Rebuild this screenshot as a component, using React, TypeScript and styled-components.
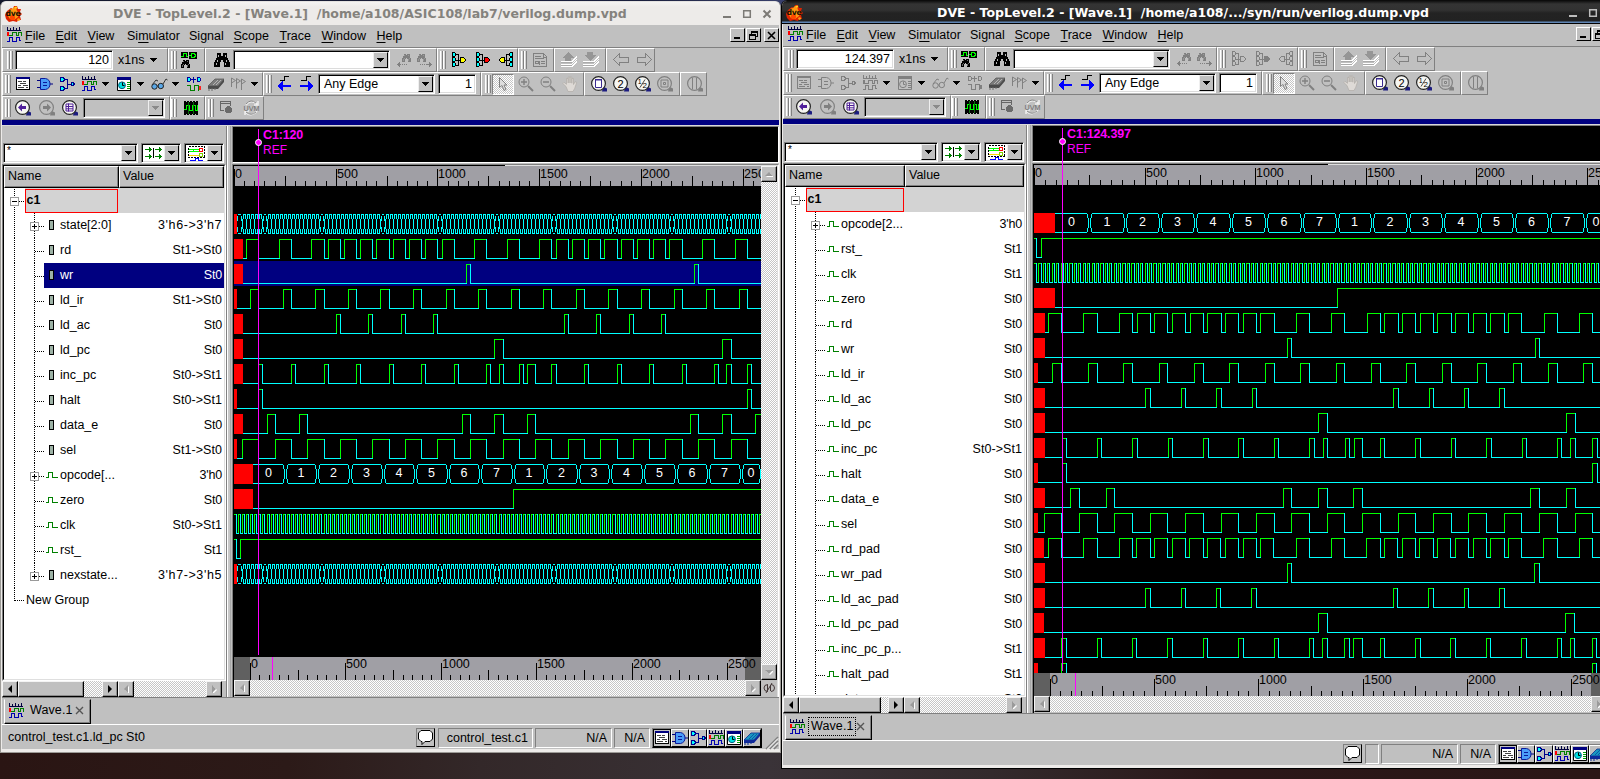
import React from 'react';
import styled, { createGlobalStyle, css } from 'styled-components';

const Global = createGlobalStyle`
  * { box-sizing: border-box; }
  html, body { margin: 0; padding: 0; overflow: hidden; }
  body { font-family: "Liberation Sans", Arial, sans-serif; font-size: 12.5px; color: #000; }
  svg { display: block; flex: none; }
`;

const FACE = '#c0c0c0';
const SHADE = '#808080';
const CYAN = '#00ffff';
const GREEN = '#00ff00';
const hatch = css`background: repeating-conic-gradient(#fff 0 25%, #c6c6c6 0 50%) 0 0 / 2px 2px;`;

/* ---------- desktop and window shells ---------- */

const Desktop = styled.div`
  position: relative;
  width: 1600px;
  height: 779px;
  overflow: hidden;
  background: linear-gradient(90deg, #2a1513 0%, #2c1a18 18%, #332829 30%, #3a3338 48%, #332a2c 62%, #2a1718 76%, #2b1716 100%);
  &::before {
    content: '';
    position: absolute;
    inset: 0 0 auto 0;
    height: 12px;
    background: linear-gradient(90deg, #14182c 0%, #1a1f3c 40%, #39406c 49%, #101018 52%);
  }
`;

const WindowFrame = styled.div<{ $x: number; $y: number; $w: number; $h: number; $dark?: boolean }>`
  position: absolute;
  left: ${p => p.$x}px;
  top: ${p => p.$y}px;
  width: ${p => p.$w}px;
  height: ${p => p.$h}px;
  display: flex;
  flex-direction: column;
  border: 1px solid ${p => (p.$dark ? '#000' : '#9c9a96')};
  border-top-color: ${p => (p.$dark ? '#0c0c0c' : '#e4e2e0')};
  border-radius: 6px 6px 0 0;
  padding: 0 1px 3px 1px;
  background: #edebe9;
  overflow: hidden;
`;

const TitleBar = styled.div<{ $dark?: boolean }>`
  flex: none;
  display: flex;
  align-items: center;
  height: 23px;
  margin: 0 -1px;
  padding: 0 8px 0 4px;
  background: ${p => (p.$dark ? 'linear-gradient(#111 0, #343434 3px, #323232 9px, #232323 12px, #222 20px, #5f85b5 21px, #5f85b5 22px, #000 22px)' : 'linear-gradient(#f4f3f2, #edebe9 5px)')};
  color: ${p => (p.$dark ? '#fff' : '#84827d')};
`;

const TitleText = styled.div<{ $pad: number }>`
  flex: 1;
  padding-left: ${p => p.$pad}px;
  font: bold 12.53px/22px "DejaVu Sans", sans-serif;
  white-space: pre;
`;

const TitleButtons = styled.div`
  display: flex;
  gap: 10px;
`;

const Client = styled.div`
  flex: 1;
  min-height: 0;
  display: flex;
  flex-direction: column;
  background: ${FACE};
`;

const MenuBar = styled.div`
  flex: none;
  display: flex;
  align-items: center;
  height: 23px;
  padding: 0 0 2px 4px;
  border-bottom: 1px solid ${SHADE};
`;

const MenuItem = styled.span<{ $w: number }>`
  flex: none;
  width: ${p => p.$w}px;
  padding-top: 1px;
  white-space: nowrap;
  u { text-underline-offset: 2px; }
`;

const MdiButtons = styled.div`
  display: flex;
  margin-left: auto;
  gap: 1px;
`;

const MdiButton = styled.div<{ $gap?: number }>`
  width: 15px;
  height: 14px;
  margin-left: ${p => p.$gap || 0}px;
  display: flex;
  align-items: center;
  justify-content: center;
  border: 1px solid;
  border-color: #fff #000 #000 #fff;
`;

/* ---------- toolbars ---------- */

const ToolRow = styled.div`
  flex: none;
  display: flex;
  height: 24px;
`;

const Group = styled.div<{ $w: number }>`
  flex: none;
  display: flex;
  align-items: center;
  width: ${p => p.$w}px;
  height: 24px;
  border: 1px solid;
  border-color: #fff ${SHADE} ${SHADE} #fff;
`;

const Handle = styled.div<{ $gap: number }>`
  flex: none;
  width: 6px;
  height: 18px;
  margin-left: ${p => p.$gap}px;
  background: linear-gradient(90deg, #fff 0 1px, #d4d4d4 1px 2px, ${SHADE} 2px 3px, #fff 3px 4px, #d4d4d4 4px 5px, ${SHADE} 5px 6px);
`;

const Slot = styled.div<{ $gap: number; $w?: number }>`
  flex: none;
  display: flex;
  align-items: center;
  width: ${p => p.$w ?? 16}px;
  margin-left: ${p => p.$gap}px;
`;

const sunken = css`
  border: 1px solid;
  border-color: ${SHADE} #fff #fff ${SHADE};
  box-shadow: inset 1px 1px 0 #000, inset -1px -1px 0 #dcdcdc;
`;

const Field = styled.div<{ $gap: number; $w: number }>`
  ${sunken}
  flex: none;
  width: ${p => p.$w}px;
  height: 20px;
  margin-left: ${p => p.$gap}px;
  padding-right: 3px;
  background: #fff;
  line-height: 18px;
  text-align: right;
`;

const Combo = styled.div<{ $gap?: number; $w?: number; $off?: boolean }>`
  ${sunken}
  flex: ${p => (p.$w ? 'none' : '1')};
  width: ${p => (p.$w ? p.$w + 'px' : 'auto')};
  height: 20px;
  margin-left: ${p => p.$gap || 0}px;
  display: flex;
  justify-content: space-between;
  align-items: center;
  padding: 1px 1px 1px 5px;
  background: ${p => (p.$off ? FACE : '#fff')};
`;

const DropButton = styled.div`
  flex: none;
  display: flex;
  align-items: center;
  justify-content: center;
  width: 15px;
  height: 16px;
  background: ${FACE};
  border: 1px solid;
  border-color: #efefef #000 #000 #efefef;
`;

const Pressed = styled.div`
  ${hatch}
  flex: none;
  display: flex;
  align-items: center;
  justify-content: center;
  width: 22px;
  height: 21px;
  margin-left: 1px;
  border: 1px solid;
  border-color: ${SHADE} #fff #fff ${SHADE};
`;

const Accent = styled.div`
  flex: none;
  height: 6px;
  background: linear-gradient(#000080 0 5px, #d8d8d8 5px);
`;

/* ---------- work area ---------- */

const Work = styled.div`
  flex: 1;
  min-height: 0;
  display: flex;
`;

const ListPane = styled.div<{ $w: number }>`
  flex: none;
  display: flex;
  flex-direction: column;
  width: ${p => p.$w}px;
`;

const FilterRow = styled.div`
  flex: none;
  display: flex;
  gap: 3px;
  height: 38px;
  padding: 17px 2px 1px 1px;
`;

const FilterText = styled.span`
  margin-left: -2px;
  font-size: 10px;
  line-height: 12px;
  align-self: flex-start;
`;

const FilterPick = styled.div`
  ${sunken}
  flex: none;
  display: flex;
  align-items: center;
  justify-content: space-between;
  width: 40px;
  height: 20px;
  padding: 1px 1px 1px 3px;
  background: #fff;
`;

const ListFrame = styled.div`
  flex: 1;
  min-height: 0;
  display: flex;
  flex-direction: column;
  border: 1px solid;
  border-color: ${SHADE} #fff #fff ${SHADE};
`;

const ListInner = styled.div`
  flex: 1;
  min-height: 0;
  display: flex;
  flex-direction: column;
  border: 1px solid;
  border-color: #000 #dfdfdf #dfdfdf #000;
  background: #fff;
  overflow: hidden;
`;

const Header = styled.div`
  flex: none;
  display: flex;
  height: 22px;
`;

const HeaderCell = styled.div<{ $w?: number }>`
  flex: ${p => (p.$w ? 'none' : '1')};
  width: ${p => (p.$w ? p.$w + 'px' : 'auto')};
  padding-left: 3px;
  line-height: 19px;
  background: ${FACE};
  border: 1px solid;
  border-color: #fff #000 #000 #fff;
  box-shadow: inset -1px -1px 0 ${SHADE};
`;

const Tree = styled.div`
  flex: 1;
  min-height: 0;
  overflow: hidden;
`;

const GroupRow = styled.div`
  display: flex;
  height: 25px;
`;

const GroupGutter = styled.div`
  flex: none;
  width: 21px;
`;

const GroupBand = styled.div<{ $w: number }>`
  flex: 1;
  height: 25px;
  padding-top: 1px;
  background: #d3d3d3;
  span {
    display: block;
    width: ${p => p.$w}px;
    height: 24px;
    border: 1px solid #f00;
    font-weight: bold;
    line-height: 20px;
    padding-left: 0.500px;
  }
`;

const SigRow = styled.div`
  display: flex;
  height: 25px;
`;

const SigBody = styled.div<{ $sel?: boolean }>`
  flex: 1;
  display: flex;
  align-items: center;
  justify-content: space-between;
  padding: 0 2px 1px 2px;
  background: ${p => (p.$sel ? '#000080' : '#fff')};
  color: ${p => (p.$sel ? '#fff' : '#000')};
  white-space: nowrap;
`;

const SigName = styled.span`
  display: flex;
  align-items: center;
  gap: 1px;
  height: 14px;
`;

const SigValue = styled.span<{ $spread: number }>`
  height: 14px;
  line-height: 14px;
  letter-spacing: ${p => p.$spread}px;
`;

const ScrollLine = styled.div`
  flex: none;
  display: flex;
  height: 16px;
  padding: 0 4px 0 0;
`;

const ScrollButton = styled.div<{ $w?: number }>`
  flex: none;
  display: flex;
  align-items: center;
  justify-content: center;
  width: ${p => p.$w || 16}px;
  height: 16px;
  background: ${FACE};
  border: 1px solid;
  border-color: #f4f4f4 #000 #000 #f4f4f4;
  box-shadow: inset -1px -1px 0 #8c8c8c;
`;

const Thumb = styled(ScrollButton)``;

const Trough = styled.div<{ $w?: number }>`
  ${hatch}
  flex: ${p => (p.$w ? 'none' : '1')};
  width: ${p => (p.$w ? p.$w + 'px' : 'auto')};
`;

const Splitter = styled.div`
  flex: none;
  width: 6px;
  background: linear-gradient(90deg, ${SHADE} 0 1px, #fff 1px 2px, #c8c8c8 2px 4px, #a8a8a8 4px 5px, ${FACE} 5px 6px);
`;

const WavePane = styled.div`
  flex: 1;
  min-width: 0;
  display: flex;
  flex-direction: column;
  position: relative;
`;

const CursorHead = styled.div<{ $pad: number }>`
  flex: none;
  height: 37px;
  border: 1px solid;
  border-color: ${SHADE} #fff #fff ${SHADE};
  background: #000;
  color: #f0f;
  padding: 0 0 0 ${p => p.$pad}px;
  line-height: 15.500px;
  b { display: block; height: 16px; line-height: 16px; letter-spacing: -0.150px; }
  span { font-size: 12px; }
`;

const WaveFrame = styled.div`
  flex: 1;
  min-height: 0;
  display: flex;
  flex-direction: column;
  margin-top: 1px;
  border: 1px solid;
  border-color: ${SHADE} #fff #fff ${SHADE};
  border-bottom: 0;
  padding: 1px 1px 0 1px;
  background: linear-gradient(90deg, #000 0 50%, #dfdfdf 50%);
`;

const WaveRowBox = styled.div`
  flex: 1;
  min-height: 0;
  display: flex;
`;

const WaveColumn = styled.div`
  flex: 1;
  min-width: 0;
  display: flex;
  flex-direction: column;
  overflow: hidden;
`;

const WaveCanvas = styled.div`
  flex: 1;
  min-height: 0;
  overflow: hidden;
  padding-top: 25px;
  background: #000;
`;

const WaveLine = styled.div<{ $sel?: boolean }>`
  height: 25px;
  background: ${p => (p.$sel ? '#000080' : 'transparent')};
`;

const VScroll = styled.div`
  flex: none;
  display: flex;
  flex-direction: column;
  width: 16px;
`;

const HScroll = styled.div`
  flex: none;
  display: flex;
  height: 17px;
  padding-bottom: 1px;
  background: ${FACE};
`;

const Corner = styled.div`
  width: 16px;
  height: 16px;
  background: ${FACE};
`;

const CursorOverlay = styled.svg`
  position: absolute;
  left: 0;
  top: 0;
  pointer-events: none;
`;

/* ---------- bottom bars ---------- */

const TabBar = styled.div`
  flex: none;
  height: 28px;
  padding: 1px 0 0 2px;
  border-top: 1px solid ${SHADE};
  border-bottom: 1px solid #fff;
`;

const Tab = styled.div`
  display: flex;
  align-items: center;
  width: 87px;
  height: 25px;
  padding: 0 0 2px 3px;
  border: 1px solid;
  border-color: ${FACE} #000 #000 #fff;
  box-shadow: inset -1px -1px 0 ${SHADE};
`;

const TabLabel = styled.span<{ $focus?: boolean }>`
  margin: 0 0 0 3px;
  width: 48px;
  height: 19px;
  padding-left: 2px;
  line-height: 17px;
  letter-spacing: 0.100px;
  white-space: nowrap;
  border: 1px dotted ${p => (p.$focus ? '#000' : 'transparent')};
`;

const StatusBar = styled.div`
  flex: none;
  display: flex;
  align-items: center;
  height: 24px;
  padding: 1px 0 0 6px;
`;

const StatusText = styled.span`
  flex: 1;
  padding-bottom: 1px;
`;

const Cell = styled.div<{ $w: number; $pad: number }>`
  width: ${p => p.$w}px;
  height: 20px;
  margin-right: 2px;
  padding-right: ${p => p.$pad}px;
  line-height: 18px;
  text-align: right;
  border: 1px solid;
  border-color: ${SHADE} #fff #fff ${SHADE};
`;

const BubbleButton = styled.div`
  display: flex;
  width: 19px;
  height: 19px;
  margin-right: 3px;
  border: 1px solid;
  border-color: ${SHADE} #000 #000 ${SHADE};
`;

const PaneButtons = styled.div`
  display: flex;
  border: 1px solid;
  border-color: ${SHADE} #000 #000 ${SHADE};
`;

const PaneButton = styled.div<{ $on?: boolean }>`
  display: flex;
  align-items: center;
  justify-content: center;
  width: 18px;
  height: 18px;
  border: 1px solid;
  border-color: ${p => (p.$on ? '#000' : '#fff')} #000 #000 ${p => (p.$on ? '#000' : '#fff')};
`;

/* ---------- icons ---------- */

type IcoProps = { off?: boolean; size?: number };
const Ico = ({ children, size = 16 }: { children: React.ReactNode; size?: number }) => (
  <svg width={size} height={size} viewBox="0 0 16 16" shapeRendering="crispEdges" fill="none">{children}</svg>
);

const Tri = ({ off }: IcoProps) => (
  <svg width="7" height="4" viewBox="0 0 7 4" shapeRendering="crispEdges">
    <path d="M0 0h7v1h-1v1h-1v1h-1v1h-1v-1h-1v-1h-1v-1h-1z" fill={off ? '#8a8a8a' : '#000'} />
  </svg>
);

const Arrow = ({ dir, off }: { dir: 'l' | 'r' | 'u' | 'd'; off?: boolean }) => {
  const turn = { l: 0, u: 90, r: 180, d: 270 }[dir];
  return (
    <svg width="8" height="8" viewBox="0 0 8 8">
      {off && <path d="M6 0v8L2 4z" fill="#fff" transform={`translate(1 1) rotate(${turn} 4 4)`} />}
      <path d="M6 0v8L2 4z" fill={off ? '#9a9a9a' : '#000'} transform={`rotate(${turn} 4 4)`} />
    </svg>
  );
};

const DveLogo = () => (
  <svg width="18" height="18" viewBox="0 0 18 18">
    <path d="M6 3l2 1 1-3 3 0 1 3 3 0-1 3 2 2-2 2 1 4-3 0-1 2-4-1-4 1-3-3-1-4 2-4z" fill="#e02400" />
    <path d="M4 5l3-1 2-2 2 0 1 4 2 2-1 4-4 3-4-1-2-3z" fill="#ff9a12" />
    <circle cx="7.5" cy="12.5" r="2.6" fill="#ff4a00" />
    <circle cx="11" cy="2.6" r="1.1" fill="#ffd21a" />
    <circle cx="13.6" cy="14.6" r="1.4" fill="#ff9a12" />
    <text x="0.6" y="10.8" fontFamily="DejaVu Sans" fontWeight="bold" fontSize="7.8" letterSpacing="-0.4" fill="#1c1200">dve</text>
  </svg>
);

const WaveIcon = ({ off }: IcoProps) => {
  const c = (x: string) => (off ? SHADE : x);
  return (
    <Ico>
      <path d="M1 3.5h14M1.5 0v3M4.5 1v3M7.5 0v3M10.5 1v3M13.5 0v3" stroke={c('#000040')} />
      <path d="M1 5h2v4h-2z" fill={c('#f00')} />
      <path d="M3 8.5h3v-3h4v3h2v-3h3v3" stroke={c('#008000')} />
      <path d="M1 14.5h2v-4h3v4h4v-4h3v3h2" stroke={c('#0000b0')} />
    </Ico>
  );
};

const SourceIcon = ({ off }: IcoProps) => {
  const k = off ? SHADE : '#000';
  return (
    <Ico>
      <path d="M1.5 1.5h13v12h-13z" fill={off ? FACE : '#fff'} stroke={k} />
      <path d="M1 1h14v2h-14z" fill={off ? SHADE : '#000080'} />
      <path d="M3 5.5h4M8 5.5h3M5 7.5h6M3 9.5h3M8 9.5h5M3 11.5h6M11 11.5h2" stroke={off ? SHADE : '#444'} />
    </Ico>
  );
};

const GateIcon = ({ off }: IcoProps) => (
  <svg width="16" height="16" viewBox="0 0 16 16" fill="none">
    <path d="M0 4.5h3M0 11.5h3M13 8h3" stroke={off ? SHADE : '#000080'} />
    <path d="M3.5 2.5h5q4.5 1 4.5 5.5q0 4.5-4.5 5.500h-5z" fill={off ? FACE : '#4a9cf8'} stroke={off ? SHADE : '#0a1a9a'} />
    <path d="M6 6.500h4M6 9.500h4" stroke={off ? SHADE : '#0a1a9a'} />
  </svg>
);

const NetIcon = ({ off }: IcoProps) => {
  const l = off ? SHADE : '#00008a';
  const f = off ? FACE : '#00ffff';
  return (
    <Ico>
      <path d="M5 3.500h3.500v9h-3.500M8.500 8h3" stroke={l} />
      <path d="M1.500 1.500h2l2 1v2l-2 1h-2zM1.500 10.500h2l2 1v2l-2 1h-2zM12.500 6.500h1l2 1v1l-2 1h-1z" fill={f} stroke={l} />
    </Ico>
  );
};

const ClockIcon = ({ off }: IcoProps) => {
  const k = off ? SHADE : '#000';
  return (
    <svg width="16" height="16" viewBox="0 0 16 16" fill="none">
      <path d="M1.500 1.500h13v13h-13z" fill={off ? FACE : '#fff'} stroke={k} />
      <path d="M1 1h14v3h-14z" fill={off ? SHADE : '#000080'} />
      <circle cx="6" cy="9.300" r="3.400" fill={off ? FACE : '#00e0e0'} stroke={off ? SHADE : '#006080'} />
      <path d="M6.500 6.500v3h2" stroke={k} />
      <path d="M11 6.500h3M11 8.500h3M11 10.500h3M11 12.500h3" stroke={off ? SHADE : '#00a000'} />
    </svg>
  );
};

const GlassesIcon = ({ off }: IcoProps) => (
  <svg width="17" height="16" viewBox="0 0 17 16" fill="none">
    <circle cx="3.500" cy="10.500" r="2.700" fill={off ? 'none' : '#5aa8e8'} stroke={off ? SHADE : '#222'} />
    <circle cx="9.800" cy="10" r="2.700" fill={off ? 'none' : '#5aa8e8'} stroke={off ? SHADE : '#222'} />
    <path d="M1 9l4-5 2 1M12 8l3-5 1.500 1M6 10h1" stroke={off ? SHADE : '#333'} />
  </svg>
);

const CompareIcon = ({ off }: IcoProps) => {
  const c = (x: string) => (off ? SHADE : x);
  return (
    <Ico>
      <path d="M5 3.500h5M7.500 1v6" stroke={c('#0000a0')} />
      <path d="M1.500 1.500h2l1 1v2l-1 1h-2zM11.500 1.500h2l1 1v2l-1 1h-2z" fill={off ? FACE : '#00ffff'} stroke={c('#0000a0')} />
      <path d="M1 9.500h3v5h4v-5h4v5h1" stroke={c('#008000')} />
      <path d="M13 10h2v4h-2z" fill={c('#ff2020')} />
    </Ico>
  );
};

const ChipIcon = ({ off }: IcoProps) => (
  <svg width="16" height="16" viewBox="0 0 16 16">
    <path d="M0 10l7-7h9l-6 7z" fill={off ? '#7c7c7c' : '#1a98c0'} stroke={off ? '#5c5c5c' : '#0a2a90'} strokeWidth="0.800" />
    <path d="M0 10h10l6-7v3l-6 7h-10z" fill={off ? '#4c4c4c' : '#102a9a'} />
    <path d="M5 9l5-5M8 9l5-5" stroke={off ? '#b4b4b4' : '#0a58a8'} strokeWidth="1" />
    <path d="M1 15v-3M4 15v-3M7 14v-2" stroke={off ? '#6c6c6c' : '#0a2a90'} />
  </svg>
);

const FlagsIcon = () => (
  <svg width="16" height="16" viewBox="0 0 16 16" fill="none" stroke={SHADE}>
    <path d="M1.500 11V2l4 2.500-4 2.500M6.500 12.500V2.500l4 2.500-4 2.500M11.500 14V3l4 2.500-4 2.500" />
  </svg>
);

const Binoculars = ({ off, s = 1 }: { off?: boolean; s?: number }) => {
  const k = off ? SHADE : '#000';
  return (
    <g transform={`scale(${s})`}>
      <path d="M3 1h4v3h2v-3h4v4l3 6v4h-6v-5h-1v-2h-2v2h-1v5h-6v-4l3-6z" fill={k} />
      <path d="M4.500 3v2M11.500 3v2M3.500 8v2M2.500 11v2M12.500 8v2M11.500 11v2" stroke={off ? '#a8a8a8' : '#b8b8b8'} />
    </g>
  );
};

const FindIcon = () => <Ico><Binoculars /></Ico>;
const FindWaveIcon = () => (
  <Ico>
    <path d="M0 0h7v6h-7zM8 0h8v7h-8z" fill="#000" />
    <path d="M0 4.500h2v-3h3v3h2M8 3.500h2M10.500 1.500h2l2 1v2l-2 1h-2z" stroke={GREEN} />
    <g transform="translate(0 7)"><Binoculars s={0.58} /></g>
  </Ico>
);
const FindStep = ({ back }: { back?: boolean }) => (
  <Ico>
    <g transform={`translate(${back ? 6 : 0} 1)`}><Binoculars off s={0.58} /></g>
    <path d={back ? 'M1 12.500h4M6 12.500h1M8 12.500h1M10 12.500h1M2.500 11v3M3.500 10v5' : 'M3 12.500h1M5 12.500h1M7 12.500h1M9 12.500h6M13.500 11v3M12.500 10v5'} stroke={SHADE} />
  </Ico>
);

const TreeGate = ({ color, off, flip }: { color: string; off?: boolean; flip?: boolean }) => {
  const k = off ? SHADE : '#000';
  const f = off ? FACE : CYAN;
  return (
    <Ico>
      <g transform={flip ? 'translate(16 0) scale(-1 1)' : undefined}>
        <path d="M5 2.500h2.500v11h-2.500M5 8h5" stroke={k} />
        <path d="M1.500 0.500h2l1 1v2l-1 1h-2zM1.500 5.500h2l1 1v2l-1 1h-2zM1.500 10.500h2l1 1v2l-1 1h-2z" fill={f} stroke={k} />
        <path d="M9.500 5.500h3l2 2v1l-2 2h-3z" fill={color} stroke={k} />
      </g>
    </Ico>
  );
};

const PageIcon = () => (
  <Ico>
    <path d="M1.500 1.500h10l3 3v10h-13z" stroke={SHADE} />
    <path d="M11.500 1v4h3M3 4.500h6M3 6.500h9M9 9.500h4M9 11.500h4" stroke={SHADE} />
    <circle cx="5" cy="10.500" r="1.500" stroke={SHADE} /><path d="M7.500 9v4" stroke={SHADE} />
  </Ico>
);

const StackIcon = ({ up }: { up?: boolean }) => (
  <Ico>
    <path d="M0 9.500h11l5-5M0 12h11l5-5M0 14.500h11l5-5" stroke="#fff" />
    <path d="M0 10.500h11M0 13h11" stroke="#aaa" />
    <path d={up ? 'M7 0l6 6h-3v3h-6v-3h-3z' : 'M4 0h6v3h3l-6 6-6-6h3z'} fill="#969696" />
  </Ico>
);

const HollowArrow = ({ flip }: { flip?: boolean }) => (
  <Ico>
    <path transform={flip ? 'translate(16 0) scale(-1 1)' : undefined} d="M0.500 7.500l6-6v3.500h8.500v5h-8.500v3.500z" stroke={SHADE} />
  </Ico>
);

const EdgeArrow = ({ flip }: { flip?: boolean }) => (
  <svg width="15" height="16" viewBox="0 0 15 16" fill="none" shapeRendering="crispEdges">
    <path d={flip ? 'M2 4.500h5v-4h5' : 'M3 4.500h4v-4h5'} stroke="#000" />
    <path transform={flip ? 'translate(15 0) scale(-1 1)' : undefined} d="M0 10l6-5v4h8v2h-8v4z" fill="#0000ff" />
  </svg>
);

const Lens = ({ off, children }: { off?: boolean; children?: React.ReactNode }) => (
  <svg width="16" height="16" viewBox="0 0.500 16 16" fill="none">
    <path d="M12 11l4 2v3h-5z" fill={off ? SHADE : '#1c1c80'} />
    <circle cx="7.500" cy="8" r="6.900" fill={off ? FACE : '#f6f6f2'} stroke={off ? SHADE : '#222'} strokeWidth="1.200" />
    {children}
  </svg>
);

const MagIcon = ({ plus }: { plus?: boolean }) => (
  <svg width="16" height="16" viewBox="0 0 16 16" fill="none" stroke={SHADE}>
    <circle cx="6" cy="6" r="5" />
    <path d={plus ? 'M3 6h6M6 3v6' : 'M3 6h6'} strokeWidth="1.400" />
    <path d="M10 10l5 5" strokeWidth="2" />
  </svg>
);

const HandIcon = () => (
  <svg width="16" height="16" viewBox="0 0 16 16" fill="#dedad6" stroke="#b0aca8" strokeWidth="0.700">
    <path d="M4 10.500L0.800 7.500l1.200-1.200 2.500 2V2.500h1.700V7V1h1.800v6V1h1.800v6.200V2.500h1.700v6l1.600-2.800 1.600 0.700-2 6L11 15.500H6z" />
  </svg>
);

const PointerIcon = () => (
  <svg width="12" height="16" viewBox="0 0 12 16" fill="#ddd" stroke="#808080">
    <path d="M2.500 1.500v10l2.500-2 2 5 2-1-2-4.500h3z" />
  </svg>
);

const GridWaveIcon = () => (
  <Ico>
    <path d="M1 1h14v14h-14z" fill="#000" />
    <path d="M3.500 0v2M6.500 0v2M9.500 0v2M12.500 0v2M3.500 14v2M6.500 14v2M9.500 14v2M12.500 14v2" stroke={FACE} />
    <path d="M1 9.500h2v-4h3v5h3v-5h3v5h2v-5h1" stroke={GREEN} />
    <path d="M5.500 2v12M10.500 2v12" stroke="#0a6a0a" />
  </Ico>
);

const DbIcon = () => (
  <Ico>
    <path d="M1.500 1.500h10v9h-10zM1 3h11" stroke="#666" />
    <circle cx="9.500" cy="9.500" r="4" fill="#6a6a6a" stroke={FACE} />
  </Ico>
);

const UvmIcon = () => (
  <svg width="17" height="16" viewBox="0 0 17 16" fill="none">
    <path d="M3 5Q8 -1 14 4M14 11Q8 18 2 12M2 15v-4h4M15 1v4h-4" stroke="#f0f0f0" strokeWidth="1.500" />
    <path d="M3 4Q8 -1.500 13 3M13 12Q8 16.500 3 12" stroke="#888" />
    <text x="0.500" y="10.500" fontFamily="Liberation Sans" fontSize="7.200" fill="#6a6a6a">UVM</text>
  </svg>
);

const MatchIcon = () => (
  <svg width="18" height="12" viewBox="0 0 18 12" shapeRendering="crispEdges" fill="none">
    <path d="M0 2.500h7M0 9.500h7M10 2.500h7M10 9.500h7M5.500 1v3M5.500 8v3M15.500 1v3M15.500 8v3M4.500 0v5M4.500 7v5M14.500 0v5M14.500 7v5" stroke="#008000" />
    <path d="M8.500 1v10" stroke="#000" />
  </svg>
);

const ColorIcon = () => (
  <svg width="17" height="16" viewBox="0 0 17 16" shapeRendering="crispEdges" fill="none">
    <path d="M0.500 1.500h16v11h-16z" stroke="#000" strokeDasharray="2 1" />
    <path d="M1 4.500h10M1 6.500h10M5.500 4v3" stroke={GREEN} />
    <path d="M11.500 3.500h3v3h-3z" stroke="#f00" />
    <path d="M1 10.500h10" stroke="#ffd800" /><path d="M11.500 8.500h3v3h-3z" stroke="#80d000" />
    <path d="M2 15.500h5v-2h3v2h5" stroke="#0000ff" />
  </svg>
);

const BubbleIcon = () => (
  <svg width="17" height="17" viewBox="0 0 17 17">
    <path d="M4 1.500h9l2.500 2.500v6l-2.500 2.500h-5l-3 3v-3h-1l-2.500-2.500v-6z" fill="#fff" stroke="#000" strokeLinejoin="round" />
  </svg>
);

const RegIcon = () => (
  <svg width="13" height="12" viewBox="0 0 13 12" shapeRendering="crispEdges">
    <path d="M3.500 1.500h4v9h-4z" fill="#9db3a6" stroke="#000" />
  </svg>
);

const NetSigIcon = () => (
  <svg width="13" height="12" viewBox="0 0 13 12" shapeRendering="crispEdges" fill="none">
    <path d="M0 8.500h2.500v-5h4v5h5.500" stroke="#008000" />
  </svg>
);

const Gutter = ({ expand, last }: { expand?: boolean; last?: boolean }) => (
  <svg width="40" height="25" viewBox="0 0 40 25" shapeRendering="crispEdges" fill="none">
    <path d="M10.500 0v25" stroke="#000" strokeDasharray="1 1" />
    <path d={`M30.500 0v${last ? 13 : 25}`} stroke="#000" strokeDasharray="1 1" />
    <path d="M31 13.500h9" stroke="#000" strokeDasharray="1 1" />
    {expand && (
      <>
        <path d="M26.500 9.500h8v8h-8z" fill="#fff" stroke="#9a9a9a" />
        <path d="M28 13.500h5M30.500 11v5" stroke="#000" />
      </>
    )}
  </svg>
);

/* ---------- waveforms ---------- */

type Pulse = [number, number];
type Signal = {
  name: string;
  value: string;
  net?: boolean;
  expand?: boolean;
  sel?: boolean;
  last?: boolean;
  unknown?: number;
  start?: 0 | 1;
  pulses?: Pulse[];
  bus?: { edges: number[]; labels?: string[] };
  lag?: number;
};
type Scale = { origin: number; perNs: number };

const END = 2620;
const box = (x: number, y: number, w: number, h: number) => `M${x} ${y}h${w}v${h}h${-w}z`;

const Wave = ({ sig, scale, width }: { sig: Signal; scale: Scale; width: number }) => {
  const X = (t: number) => Math.floor(scale.origin + scale.perNs * (t + (sig.lag || 0)));
  let cyan = '';
  let green = '';
  let x0 = 0;
  let red = 0;
  if (sig.unknown) {
    x0 = X(sig.unknown);
    red = x0 + 1;
  }
  const labels: React.ReactNode[] = [];
  if (sig.bus) {
    const xs = sig.bus.edges.map(X);
    xs.forEach((a, i) => {
      if (i === xs.length - 1) return;
      const b = xs[i + 1];
      const w = b - a;
      if (w > 10) {
        const from = i === 0 ? a : a + 3;
        cyan += box(from, 3, b - 2 - from, 1) + box(from, 22, b - 2 - from, 1);
        cyan += box(b - 2, 4, 1, 4) + box(b - 1, 8, 1, 10) + box(b - 2, 18, 1, 4);
        if (i) cyan += box(a + 2, 4, 1, 4) + box(a + 1, 8, 1, 10) + box(a + 2, 18, 1, 4);
        labels.push(<text key={i} x={(a + b) / 2} y="16" textAnchor="middle" fontFamily="Liberation Sans" fontSize="12.500" fill="#fff">{sig.bus!.labels![i]}</text>);
      } else if (w === 4) {
        cyan += box(a, 8, 1, 10) + box(a + 1, 3, 3, 1) + box(a + 1, 22, 3, 1);
        cyan += box(a + 1, 3, 1, 5) + box(a + 3, 3, 1, 5) + box(a + 1, 18, 1, 5) + box(a + 3, 18, 1, 5);
      } else {
        cyan += box(a, 8, 1, 10) + box(a + 2, 3, w - 3, 1) + box(a + 2, 22, w - 3, 1);
        cyan += box(a + 1, 5, 1, 5) + box(b - 1, 5, 1, 5) + box(a + 1, 16, 1, 5) + box(b - 1, 16, 1, 5);
      }
    });
  } else {
    let level = sig.start || 0;
    let cur = x0;
    const toggles: number[] = [];
    (sig.pulses || []).forEach(([a, b]) => toggles.push(X(a), X(b)));
    toggles.forEach(x => {
      if (level) {
        green += box(cur, 3, x - cur + 1, 1);
        cyan += box(x, 3, 1, 20);
      } else {
        cyan += box(cur, 22, x - cur + 1, 1);
        green += box(x, 3, 1, 20);
      }
      cur = x;
      level = level ? 0 : 1;
    });
    const tail = Math.max(0, width - cur);
    if (level) green += box(cur, 3, tail, 1);
    else cyan += box(cur, 22, tail, 1);
  }
  return (
    <svg width={width} height="25" viewBox={`0 0 ${width} 25`}>
      <g shapeRendering="crispEdges">
        <path d={green} fill={GREEN} />
        <path d={cyan} fill={CYAN} />
        {red > 0 && <path d={box(0, 3, red, 20)} fill="#f00" />}
      </g>
      {labels}
    </svg>
  );
};

const every = (from: number, width: number, step = 160): Pulse[] => {
  const out: Pulse[] = [];
  for (let t = from; t < END; t += step) out.push([t, t + width]);
  return out;
};
const width20 = (...ts: number[]): Pulse[] => ts.map(t => [t, t + 20]);
const width40 = (...ts: number[]): Pulse[] => ts.map(t => [t, t + 40]);

const RD: Pulse[] = [60, 220, 380, 460, 540, 620, 700, 780, 860, 940, 1020, 1180, 1340, 1500, 1580, 1660, 1740, 1820, 1900, 1980, 2060, 2140, 2300, 2460].map(t => [t, t + 60]);
const WR = width20(1140, 2260);
const LD_IR = every(80, 40);
const LD_AC = width20(500, 660, 820, 980, 1620, 1780, 1940, 2100);
const LD_PC = width40(1280, 2400);
const INC: Pulse[] = [...width20(120, 280, 440, 600, 760, 920, 1080, 1240, 1300, 1400), [1440, 1480], ...width20(1560, 1720, 1880, 2040, 2200, 2360, 2420, 2520)];
const HALT = width20(120, 2520);
const DATA_E = width40(160, 320, 1120, 1280, 1440, 2240, 2400, 2560);
const SEL = every(40, 80);
const CLK: Pulse[] = Array.from({ length: 132 }, (_, i) => [10 + i * 20, 20 + i * 20] as Pulse);
const OP_EDGES = [90, ...Array.from({ length: 15 }, (_, i) => 250 + i * 160), 2592];
const OP_LABELS = ['0', '1', '2', '3', '4', '5', '6', '7', '1', '2', '3', '4', '5', '6', '7', '0'];
const STATE_EDGES = [10, ...Array.from({ length: 129 }, (_, i) => 40 + i * 20)];

const leftSignals: Signal[] = [
  { name: 'state[2:0]', value: "3'h6->3'h7", expand: true, unknown: 10, bus: { edges: STATE_EDGES } },
  { name: 'rd', value: 'St1->St0', unknown: 40, pulses: RD },
  { name: 'wr', value: 'St0', sel: true, unknown: 40, pulses: WR },
  { name: 'ld_ir', value: 'St1->St0', unknown: 10, pulses: LD_IR },
  { name: 'ld_ac', value: 'St0', unknown: 40, pulses: LD_AC },
  { name: 'ld_pc', value: 'St0', unknown: 40, pulses: LD_PC },
  { name: 'inc_pc', value: 'St0->St1', unknown: 40, pulses: INC },
  { name: 'halt', value: 'St0->St1', unknown: 10, pulses: HALT },
  { name: 'data_e', value: 'St0', unknown: 40, pulses: DATA_E },
  { name: 'sel', value: 'St1->St0', unknown: 10, pulses: SEL },
  { name: 'opcode[...', value: "3'h0", net: true, expand: true, unknown: 90, bus: { edges: OP_EDGES, labels: OP_LABELS } },
  { name: 'zero', value: 'St0', net: true, unknown: 90, pulses: [[1370, 9000]] },
  { name: 'clk', value: 'St0->St1', net: true, start: 1, pulses: CLK },
  { name: 'rst_', value: 'St1', net: true, start: 1, pulses: [[10, 30]] },
  { name: 'nexstate...', value: "3'h7->3'h5", expand: true, last: true, unknown: 10, bus: { edges: STATE_EDGES } },
];

const rightSignals: Signal[] = [
  { name: 'opcode[2...', value: "3'h0", expand: true, unknown: 90, bus: { edges: OP_EDGES, labels: OP_LABELS } },
  { name: 'rst_', value: 'St1', start: 1 as const, pulses: [[10, 30]] as Pulse[] },
  { name: 'clk', value: 'St1', start: 1 as const, pulses: CLK },
  { name: 'zero', value: 'St0', unknown: 90, pulses: [[1370, 9000]] as Pulse[] },
  { name: 'rd', value: 'St0', unknown: 40, pulses: RD, lag: 3.5 },
  { name: 'wr', value: 'St0', unknown: 40, pulses: WR, lag: 3.9 },
  { name: 'ld_ir', value: 'St0', unknown: 10, pulses: LD_IR, lag: 3.5 },
  { name: 'ld_ac', value: 'St0', unknown: 40, pulses: LD_AC, lag: 3.5 },
  { name: 'ld_pc', value: 'St0', unknown: 40, pulses: LD_PC, lag: 3.5 },
  { name: 'inc_pc', value: 'St0->St1', unknown: 40, pulses: INC, lag: 4.4 },
  { name: 'halt', value: 'St0', unknown: 10, pulses: HALT, lag: 4.4 },
  { name: 'data_e', value: 'St0', unknown: 40, pulses: DATA_E, lag: 3.5 },
  { name: 'sel', value: 'St0', unknown: 10, pulses: SEL, lag: 3.5 },
  { name: 'rd_pad', value: 'St0', unknown: 39, pulses: RD, lag: 2.6 },
  { name: 'wr_pad', value: 'St0', unknown: 42, pulses: WR, lag: 2.6 },
  { name: 'ld_ac_pad', value: 'St0', unknown: 42, pulses: LD_AC, lag: 2.8 },
  { name: 'ld_pc_pad', value: 'St0', unknown: 39, pulses: LD_PC, lag: 2.6 },
  { name: 'inc_pc_p...', value: 'St1', unknown: 42, pulses: INC, lag: 2.8 },
  { name: 'halt_pad', value: 'St1', unknown: 12, pulses: HALT, lag: 2.8 },
  { name: 'data_e_p...', value: 'St0', unknown: 42, pulses: DATA_E, lag: 2.8 },
].map(s => ({ ...s, net: true }));

const spreadOf = (value: string) => (value.includes('>') ? (value.startsWith('3') ? 0.6 : 0.05) : -0.2);

type RulerProps = { height: number; width: number; scale: Scale; tops: [number, number, number]; textY: number; textDx: number; range?: [number, number]; mark?: number };
const Ruler = ({ height, width, scale, tops, textY, textDx, range, mark }: RulerProps) => {
  const X = (t: number) => Math.floor(scale.origin + scale.perNs * t);
  let d = '';
  const text: React.ReactNode[] = [];
  const limit = range ? 2560 : END;
  for (let t = 0; t < limit; t += 50) {
    const top = t % 500 === 0 ? tops[0] : t % 250 === 0 ? tops[1] : tops[2];
    d += box(X(t), top, 1, height - top);
    if (t % 500 === 0) text.push(<text key={t} x={X(t) + textDx} y={textY} fontFamily="Liberation Sans" fontSize="12.500">{t}</text>);
  }
  return (
    <svg width={width} height={height} viewBox={`0 0 ${width} ${height}`}>
      <path d={box(0, 0, width, height)} fill="#a09fa5" />
      {range && <path d={box(0, 0, range[0], height) + box(range[1], 0, width - range[1], height)} fill="#606060" />}
      <path d={d} shapeRendering="crispEdges" />
      {text}
      {mark !== undefined && <path d={box(mark, 0, 1, height)} fill="#f0f" />}
    </svg>
  );
};

/* ---------- application window ---------- */

type WindowSpec = {
  x: number; y: number; w: number; h: number;
  active?: boolean;
  title: string; titlePad: number;
  time: string; firstGroup: number;
  listW: number; nameW: number; groupW: number; thumbW: number; gapW: number;
  signals: Signal[]; newGroup?: boolean;
  scale: Scale; overview: Scale; mark: number; cursorX: number; cursorText: number; waveW: number;
  status: string; scope: string; scopeW: number;
};

const menus: [string, number, number][] = [
  ['File', 0, 30.5], ['Edit', 0, 32], ['View', 0, 39.5], ['Simulator', 2, 62], ['Signal', 2, 44.5],
  ['Scope', 0, 46], ['Trace', 0, 42], ['Window', 0, 55], ['Help', 0, 30],
];

const Toolbars = ({ spec }: { spec: WindowSpec }) => {
  const off = spec.active;
  return (
    <>
      <ToolRow>
        <Group $w={spec.firstGroup}>
          <Handle $gap={4} />
          <Field $gap={2} $w={98}>{spec.time}</Field>
          <Slot $gap={5} $w={26}>x1ns</Slot>
          <Slot $gap={6} $w={7}><Tri /></Slot>
        </Group>
        <Group $w={37}><Handle $gap={2} /><Slot $gap={4}><FindWaveIcon /></Slot></Group>
        <Group $w={232}>
          <Slot $gap={8}><FindIcon /></Slot>
          <Combo $gap={3} $w={157}><span /><DropButton><Tri /></DropButton></Combo>
          <Slot $gap={6}><FindStep back /></Slot>
          <Slot $gap={5}><FindStep /></Slot>
        </Group>
        <Group $w={81}>
          <Handle $gap={2} />
          <Slot $gap={5}><TreeGate color={off ? FACE : '#ffff00'} off={off} /></Slot>
          <Slot $gap={8}><TreeGate color={off ? SHADE : '#ff0000'} off={off} /></Slot>
          <Slot $gap={7}><TreeGate color={off ? FACE : '#ffff00'} off={off} flip /></Slot>
        </Group>
        <Group $w={36}><Handle $gap={2} /><Slot $gap={5}><PageIcon /></Slot></Group>
        <Group $w={52}><Slot $gap={6}><StackIcon up /></Slot><Slot $gap={6}><StackIcon /></Slot></Group>
        <Group $w={49}><Slot $gap={6}><HollowArrow /></Slot><Slot $gap={7}><HollowArrow flip /></Slot></Group>
      </ToolRow>
      <ToolRow>
        <Group $w={261}>
          <Handle $gap={2} />
          <Slot $gap={4}><SourceIcon off={off} /></Slot>
          <Slot $gap={6}><GateIcon off={off} /></Slot>
          <Slot $gap={6}><NetIcon off={off} /></Slot>
          <Slot $gap={6}><WaveIcon off={off} /></Slot>
          <Slot $gap={5} $w={7}><Tri /></Slot>
          <Slot $gap={7}><ClockIcon off={off} /></Slot>
          <Slot $gap={5} $w={7}><Tri /></Slot>
          <Slot $gap={7}><GlassesIcon off={off} /></Slot>
          <Slot $gap={5} $w={7}><Tri /></Slot>
          <Slot $gap={7}><CompareIcon off={off} /></Slot>
          <Slot $gap={6}><ChipIcon off /></Slot>
          <Slot $gap={6}><FlagsIcon /></Slot>
          <Slot $gap={5} $w={7}><Tri /></Slot>
        </Group>
        <Group $w={218}>
          <Handle $gap={2} />
          <Slot $gap={5}><EdgeArrow /></Slot>
          <Slot $gap={6} $w={15}><EdgeArrow flip /></Slot>
          <Combo $gap={4} $w={117}>Any Edge<DropButton><Tri /></DropButton></Combo>
          <Field $gap={3} $w={38}>1</Field>
        </Group>
        <Group $w={103}>
          <Handle $gap={3} />
          <Pressed><PointerIcon /></Pressed>
          <Slot $gap={4}><MagIcon plus /></Slot>
          <Slot $gap={6}><MagIcon /></Slot>
          <Slot $gap={6}><HandIcon /></Slot>
        </Group>
        <Group $w={96}>
          <Slot $gap={6}><Lens><path d="M4.500 4h6v8h-6z" fill="#fff" stroke="#3a2a90" /><path d="M4 4.300h7" stroke="#3a2a90" strokeWidth="1.500" /></Lens></Slot>
          <Slot $gap={6}><Lens><text x="4.500" y="12" fontFamily="Liberation Sans" fontSize="11" fill="#000">2</text></Lens></Slot>
          <Slot $gap={6}><Lens><text x="2.800" y="8.500" fontFamily="Liberation Sans" fontSize="7" fill="#000">1</text><text x="7.600" y="12.800" fontFamily="Liberation Sans" fontSize="8" fill="#000">2</text><path d="M5 12l5-8" stroke="#000" strokeWidth="0.700" /></Lens></Slot>
          <Slot $gap={6}><Lens off><path d="M4 4.500h7v7h-7zM6.500 7h2v2h-2z" stroke={SHADE} /></Lens></Slot>
        </Group>
        <Group $w={27}><Slot $gap={6}><Lens off><path d="M5.500 2v12M9.500 2v12" stroke={SHADE} /></Lens></Slot></Group>
      </ToolRow>
      <ToolRow>
        <Group $w={168}>
          <Handle $gap={2} />
          <Slot $gap={4}><Lens><path d="M3 8l4-4v2.500h4v3h-4v2.500z" fill="#50209a" /></Lens></Slot>
          <Slot $gap={8}><Lens off><path d="M12 8l-4-4v2.500h-4v3h4v2.500z" fill={SHADE} /></Lens></Slot>
          <Slot $gap={7}><Lens><path d="M4 4.500h7v7h-7zM4 7h7M4 9.300h7M6.500 4v8" stroke="#50209a" /></Lens></Slot>
          <Combo $gap={5} $w={82} $off><span /><DropButton><Tri off /></DropButton></Combo>
        </Group>
        <Group $w={35}><Handle $gap={0} /><Slot $gap={6}><GridWaveIcon /></Slot></Group>
        <Group $w={59}><Handle $gap={2} /><Slot $gap={5}><DbIcon /></Slot><Slot $gap={8}><UvmIcon /></Slot></Group>
      </ToolRow>
    </>
  );
};

const AppWindow = ({ spec }: { spec: WindowSpec }) => {
  const dark = spec.active;
  const ink = dark ? '#bdbdbd' : '#7c7a76';
  const cursorEnd = spec.h - 223;
  return (
    <WindowFrame $x={spec.x} $y={spec.y} $w={spec.w} $h={spec.h} $dark={dark}>
      <TitleBar $dark={dark}>
        <DveLogo />
        <TitleText $pad={spec.titlePad}>{spec.title}</TitleText>
        <TitleButtons>
          <svg width="10" height="10" viewBox="0 0 10 10"><path d="M1 8h8" stroke={ink} strokeWidth="2" /></svg>
          <svg width="10" height="10" viewBox="0 0 10 10"><path d="M1.700 1.700h6.600v6.600h-6.600z" fill="none" stroke={ink} strokeWidth="1.500" /></svg>
          <svg width="10" height="10" viewBox="0 0 10 10"><path d="M1.500 1.500l7 7M8.500 1.500l-7 7" stroke={ink} strokeWidth="2" /></svg>
        </TitleButtons>
      </TitleBar>
      <Client>
        <MenuBar>
          <WaveIcon />
          <MenuItem $w={3} />
          {menus.map(([m, u, w]) => (
            <MenuItem key={m} $w={w}>{m.slice(0, u)}<u>{m[u]}</u>{m.slice(u + 1)}</MenuItem>
          ))}
          <MdiButtons>
            <MdiButton><svg width="9" height="9"><path d="M1 6h6v2h-6z" /></svg></MdiButton>
            <MdiButton><svg width="9" height="9" shapeRendering="crispEdges" fill="none" stroke="#000"><path d="M2.500 3v-2.500h6v5h-2M0.500 3.500h6v5h-6zM2 1.500h7M0 4.500h7" /></svg></MdiButton>
            <MdiButton $gap={2}><svg width="9" height="9"><path d="M1 1l7 7M8 1l-7 7" stroke="#000" strokeWidth="1.600" /></svg></MdiButton>
          </MdiButtons>
        </MenuBar>
        <Toolbars spec={spec} />
        <Accent />
        <Work>
          <ListPane $w={spec.listW}>
            <FilterRow>
              <Combo><FilterText>*</FilterText><DropButton><Tri /></DropButton></Combo>
              <FilterPick><MatchIcon /><DropButton><Tri /></DropButton></FilterPick>
              <FilterPick><ColorIcon /><DropButton><Tri /></DropButton></FilterPick>
            </FilterRow>
            <ListFrame>
              <ListInner>
                <Header><HeaderCell $w={spec.nameW}>Name</HeaderCell><HeaderCell>Value</HeaderCell></Header>
                <Tree>
                  <GroupRow>
                    <GroupGutter>
                      <svg width="21" height="25" shapeRendering="crispEdges" fill="none">
                        <path d="M10.500 1v24M11 13.500h10" stroke="#000" strokeDasharray="1 1" />
                        <path d="M6.500 9.500h8v8h-8z" fill="#fff" stroke="#9a9a9a" />
                        <path d="M8 13.500h5" stroke="#000" />
                      </svg>
                    </GroupGutter>
                    <GroupBand $w={spec.groupW}><span>c1</span></GroupBand>
                  </GroupRow>
                  {spec.signals.map(s => (
                    <SigRow key={s.name}>
                      <Gutter expand={s.expand} last={s.last} />
                      <SigBody $sel={s.sel}>
                        <SigName>{s.net ? <NetSigIcon /> : <RegIcon />}{s.name}</SigName>
                        <SigValue $spread={spreadOf(s.value)}>{s.value}</SigValue>
                      </SigBody>
                    </SigRow>
                  ))}
                  {spec.newGroup && (
                    <SigRow>
                      <svg width="20" height="25" shapeRendering="crispEdges" fill="none">
                        <path d="M10.500 0v13M11 12.500h9" stroke="#000" strokeDasharray="1 1" />
                      </svg>
                      <SigBody>New Group</SigBody>
                    </SigRow>
                  )}
                </Tree>
              </ListInner>
            </ListFrame>
            <ScrollLine>
              <ScrollButton><Arrow dir="l" /></ScrollButton>
              <Thumb $w={spec.thumbW} />
              <Trough $w={spec.gapW} />
              <ScrollButton><Arrow dir="r" /></ScrollButton>
              <ScrollButton><Arrow dir="l" off /></ScrollButton>
              <Trough />
              <ScrollButton><Arrow dir="r" off /></ScrollButton>
            </ScrollLine>
          </ListPane>
          <Splitter />
          <WavePane>
            <CursorHead $pad={spec.cursorText}><b>C1:{spec.time}</b><span>REF</span></CursorHead>
            <WaveFrame>
              <WaveRowBox>
                <WaveColumn>
                  <Ruler height={20} width={spec.waveW} scale={spec.scale} tops={[3, 10, 15]} textY={11.5} textDx={1} />
                  <WaveCanvas>
                    {spec.signals.map(s => (
                      <WaveLine key={s.name} $sel={s.sel}><Wave sig={s} scale={spec.scale} width={spec.waveW} /></WaveLine>
                    ))}
                  </WaveCanvas>
                  <Ruler height={23} width={spec.waveW} scale={spec.overview} tops={[6, 13, 18]} textY={11} textDx={1} range={[16, spec.waveW - 16]} mark={spec.mark} />
                </WaveColumn>
                <VScroll>
                  <ScrollButton><Arrow dir="u" off /></ScrollButton>
                  <Trough />
                  <ScrollButton><Arrow dir="d" off /></ScrollButton>
                </VScroll>
              </WaveRowBox>
              <HScroll>
                <ScrollButton><Arrow dir="l" off /></ScrollButton>
                <Trough />
                <ScrollButton><Arrow dir="r" off /></ScrollButton>
                <Corner>
                  <svg width="16" height="16" fill="none" stroke="#443838"><path d="M7 4.500Q3 4.500 3 8t4 3.500M6.500 5v6M5 13l6-10M10 4.500q3.500 0 3.500 3.500t-3.500 3.500M9.500 5v6" /></svg>
                </Corner>
              </HScroll>
            </WaveFrame>
            <CursorOverlay width="60" height={cursorEnd}>
              <path d={box(spec.cursorX, 3, 1, cursorEnd - 3)} fill="#f0f" shapeRendering="crispEdges" />
              <circle cx={spec.cursorX + 0.5} cy="16.500" r="3" fill="#f0f" stroke="#fff" />
            </CursorOverlay>
          </WavePane>
        </Work>
        <TabBar>
          <Tab>
            <WaveIcon />
            <TabLabel $focus={dark}>Wave.1</TabLabel>
            <svg width="10" height="10"><path d="M1 1l7 7M8 1l-7 7" stroke="#555" strokeWidth="1.400" /></svg>
          </Tab>
        </TabBar>
        <StatusBar>
          <StatusText>{spec.status}</StatusText>
          <BubbleButton><BubbleIcon /></BubbleButton>
          <Cell $w={spec.scopeW} $pad={4}>{spec.scope}</Cell>
          <Cell $w={77} $pad={4}>N/A</Cell>
          <Cell $w={36} $pad={4}>N/A</Cell>
          <PaneButtons>
            <PaneButton $on><SourceIcon /></PaneButton>
            <PaneButton><GateIcon /></PaneButton>
            <PaneButton><NetIcon /></PaneButton>
            <PaneButton><WaveIcon /></PaneButton>
            <PaneButton><ClockIcon /></PaneButton>
            <PaneButton><ChipIcon /></PaneButton>
          </PaneButtons>
          <svg width="17" height="24" fill="none"><path d="M4 23L16 11M8 23l8-8M12 23l4-4" stroke={SHADE} strokeWidth="1.500" /><path d="M5.500 23L16 12.500M9.500 23l6.500-6.500" stroke="#fff" /></svg>
        </StatusBar>
      </Client>
    </WindowFrame>
  );
};

const left: WindowSpec = {
  x: 0, y: 1, w: 781, h: 752,
  title: 'DVE - TopLevel.2 - [Wave.1]  /home/a108/ASIC108/lab7/verilog.dump.vpd', titlePad: 90,
  time: '120', firstGroup: 166,
  listW: 224, nameW: 115, groupW: 93, thumbW: 66, gapW: 18,
  signals: leftSignals, newGroup: true,
  scale: { origin: 0.47, perNs: 0.2035 }, overview: { origin: 16.4, perNs: 0.1908 }, mark: 38, cursorX: 26, cursorText: 30, waveW: 527,
  status: 'control_test.c1.ld_pc St0', scope: 'control_test.c1', scopeW: 95,
};

const right: WindowSpec = {
  x: 781, y: 0, w: 846, h: 769, active: true,
  title: 'DVE - TopLevel.2 - [Wave.1]  /home/a108/.../syn/run/verilog.dump.vpd', titlePad: 133,
  time: '124.397', firstGroup: 165,
  listW: 243, nameW: 120, groupW: 98, thumbW: 82, gapW: 7,
  signals: rightSignals,
  scale: { origin: 0.5, perNs: 0.2212 }, overview: { origin: 16.5, perNs: 0.2084 }, mark: 41, cursorX: 30, cursorText: 34, waveW: 573,
  status: '', scope: '', scopeW: 14,
};

export default function App() {
  return (
    <Desktop>
      <Global />
      <AppWindow spec={left} />
      <AppWindow spec={right} />
    </Desktop>
  );
}
